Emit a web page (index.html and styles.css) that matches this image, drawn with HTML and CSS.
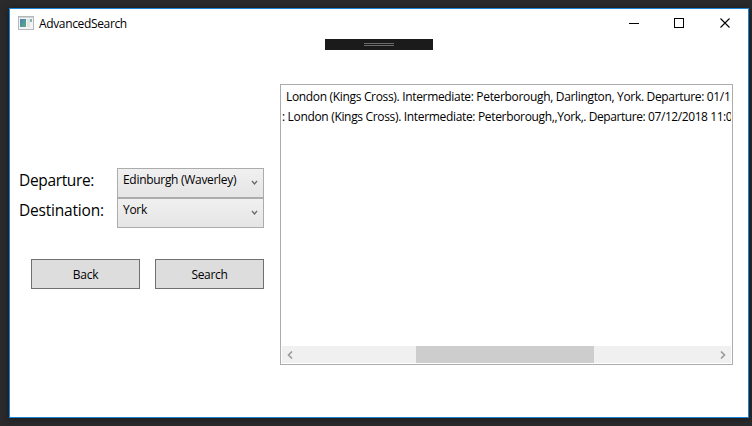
FILE: index.html
```html
<!DOCTYPE html>
<html lang="en">
<head>
<meta charset="utf-8">
<title>AdvancedSearch</title>
<link rel="stylesheet" href="styles.css">
</head>
<body>
<main class="window">
  <header class="titlebar">
    <svg class="app-icon" width="16" height="14" viewBox="0 0 16 14" shape-rendering="crispEdges">
      <defs><linearGradient id="pane" x1="0" y1="0" x2="1" y2="1"><stop offset="0" stop-color="#4d7fb0"/><stop offset="1" stop-color="#58ad82"/></linearGradient></defs>
      <rect x=".5" y=".5" width="15" height="13" fill="#f4f4f4" stroke="#b4b8bc"/>
      <rect x="1" y="1" width="14" height="1" fill="#d0d3d6"/>
      <rect x="2" y="3" width="6" height="8" fill="url(#pane)"/>
      <rect x="9" y="3" width="3" height="8" fill="#e2e4e6"/>
      <rect x="12" y="3" width="2" height="3" fill="#85b5ad"/>
    </svg>
    <h1 class="title">AdvancedSearch</h1>
    <svg class="controls" width="104" height="12" viewBox="0 0 104 12" fill="none" stroke="#000">
      <path d="M0 6.500h10M45.500 1.500h9v9h-9z" shape-rendering="crispEdges"/>
      <path d="M91.500 1.500l9 9M100.500 1.500l-9 9" stroke-width="1.100"/>
    </svg>
  </header>
  <div class="debug-bar"><span class="grip"></span></div>
  <div class="content">
    <section class="form">
      <div class="field"><span class="label departure">Departure:</span>
        <div class="combo"><span>Edinburgh (Waverley)</span><svg class="chevron" width="7" height="6" viewBox="0 0 7 6"><path d="M1 1l2.500 3L6 1" fill="none" stroke="#666" stroke-width="1.200"/></svg></div></div>
      <div class="field"><span class="label">Destination:</span>
        <div class="combo"><span>York</span><svg class="chevron" width="7" height="6" viewBox="0 0 7 6"><path d="M1 1l2.500 3L6 1" fill="none" stroke="#666" stroke-width="1.200"/></svg></div></div>
      <div class="buttons"><button>Back</button><button>Search</button></div>
    </section>
    <section class="results">
      <div class="rows">
        <p class="row first">London (Kings Cross). Intermediate: Peterborough, Darlington, York. Departure: 01/12</p>
        <p class="row">: London (Kings Cross). Intermediate: Peterborough<span class="tail">,,York,. Departure: 07/12/2018 11:00</span></p>
      </div>
      <div class="scrollbar">
        <svg width="6" height="8" viewBox="0 0 6 8"><path d="M5 .5L1.500 4 5 7.500" fill="none" stroke="#999" stroke-width="1.600"/></svg>
        <span class="thumb"></span>
        <svg width="6" height="8" viewBox="0 0 6 8"><path d="M1 .5L4.500 4 1 7.500" fill="none" stroke="#999" stroke-width="1.600"/></svg>
      </div>
    </section>
  </div>
</main>
</body>
</html>
```
FILE: styles.css
```css
* { box-sizing: border-box; }
body {
  margin: 0;
  width: 752px;
  height: 426px;
  overflow: hidden;
  padding: 8px 3px 8px 9px;
  background: #2a2a2c;
  color: #000;
  font: 12px/16px "Open Sans", "Noto Sans", sans-serif;
  letter-spacing: -0.3px;
}
.window {
  width: 740px;
  height: 410px;
  border: 1px solid #1883d7;
  background: #fff;
  box-shadow: 0 1px 7px rgba(0, 0, 0, 0.4);
}
.titlebar {
  display: flex;
  align-items: center;
  height: 30px;
  padding: 0 15px 0 8px;
}
.app-icon { position: relative; top: -1px; }
.title { margin: 0 auto 0 5px; font-size: 12px; font-weight: 400; letter-spacing: -0.35px; }
.controls { position: relative; top: -1px; }
.debug-bar {
  width: 108px;
  height: 11px;
  margin-left: 315px;
  padding: 4px 39px 0;
  background: #1b1b1b;
}
.grip { display: block; height: 3px; border: solid #6b6b6b; border-width: 1px 0; }
.content {
  display: grid;
  grid-template-columns: 245px 453px;
  column-gap: 16px;
  padding: 34px 0 0 9px;
}
.form { padding-top: 84px; }
.field { display: grid; grid-template-columns: 98px 147px; height: 30px; }
.label { font-size: 15.5px; line-height: 24px; letter-spacing: -0.2px; white-space: nowrap; }
.departure { letter-spacing: -0.35px; }
.combo {
  display: flex;
  justify-content: space-between;
  height: 30px;
  padding: 3px 5px 0 5px;
  border: 1px solid #acacac;
  background: linear-gradient(#f0f0f0, #e5e5e5);
}
.chevron { margin-top: 8px; }
.buttons { display: flex; gap: 15px; margin: 31px 0 0 12px; }
button {
  width: 109px;
  height: 30px;
  padding: 2px 0 0;
  border: 1px solid #707070;
  background: #ddd;
  color: #000;
  font: inherit;
  letter-spacing: inherit;
}
.results {
  display: flex;
  flex-direction: column;
  justify-content: space-between;
  height: 281px;
  padding: 1px;
  border: 1px solid #acacac;
}
.rows { overflow: hidden; padding-top: 1px; }
.row { margin: 0; line-height: 20px; white-space: nowrap; letter-spacing: -0.33px; }
.first { padding-left: 4px; }
.tail { letter-spacing: -0.42px; }
.scrollbar {
  display: flex;
  align-items: center;
  justify-content: space-between;
  height: 17px;
  padding: 0 5px;
  background: #f0f0f0;
}
.thumb { width: 178px; height: 17px; margin-right: 3px; background: #cdcdcd; }
```
